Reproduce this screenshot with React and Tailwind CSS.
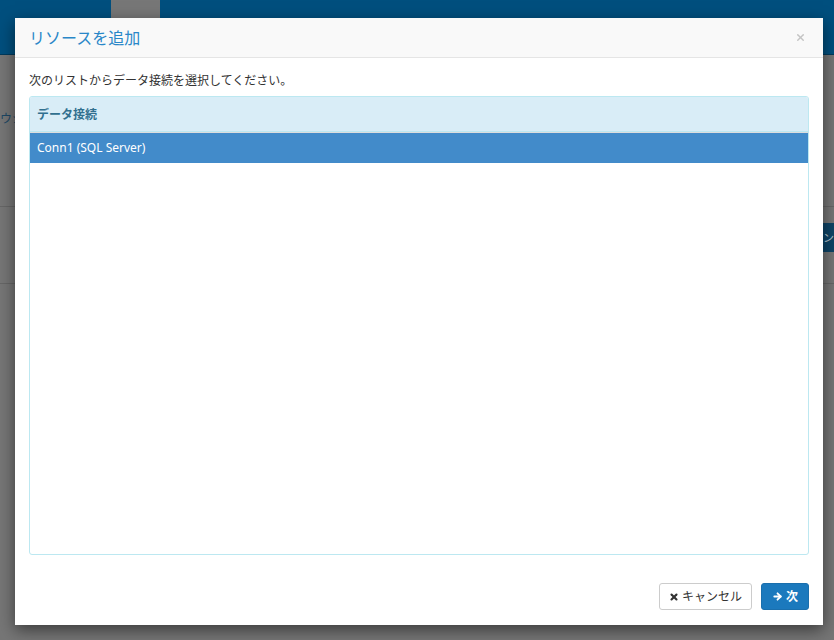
import { X, ArrowRight } from 'lucide-react';

const font = { fontFamily: '"Noto Sans", "Noto Sans CJK JP", sans-serif' };

// Dimmed page behind the dialog
const Backdrop = () => (
    <div className="absolute inset-0 bg-[#767676]">
        <div className="h-[55px] bg-[#004f7e] flex border-b border-[#003a5c]">
            <div className="ml-[111px] w-[49px] bg-[#777777]"></div>
        </div>
        <div className="h-[152px] border-b border-[#666] flex items-center">
            <span className="text-[12px] text-[#1d4764] -mt-[24px]">ウシ</span>
        </div>
        <div className="h-[77px] border-b border-[#666] flex justify-end items-center">
            <div className="w-[11px] h-[29px] bg-[#0e4466] -mt-[16px] text-[11px] leading-[29px] text-[#b7c8d4] overflow-hidden">ン</div>
        </div>
    </div>
);

const App = () => {
    return (
        <div className="relative w-[834px] h-[640px] overflow-hidden" style={font}>
            <Backdrop />

            {/* Modal */}
            <div className="absolute left-[15px] top-[18px] w-[808px] h-[607px] bg-white flex flex-col shadow-[0_5px_15px_rgba(0,0,0,0.5)]">
                <div className="h-[40px] shrink-0 bg-[#f9f9f9] border-b border-[#e5e5e5] flex items-center justify-between px-[14px]">
                    <h1 className="text-[16px] text-[#2a87c8] font-normal">リソースを追加</h1>
                    <X className="h-[11px] w-[11px] text-[#c4c4c4] mr-[3px]" strokeWidth={3} />
                </div>

                <div className="flex-1 flex flex-col px-[14px] pt-[14px] min-h-0">
                    <p className="text-[12px] text-[#333] leading-[17px] mb-[7px]">次のリストからデータ接続を選択してください。</p>
                    <div className="h-[459px] border border-[#bce8f1] rounded-[3px] overflow-hidden flex flex-col">
                        <div className="h-[35px] bg-[#d9edf7] border-b border-[#bce8f1] flex items-center px-[7px] pt-[1px] text-[12px] font-semibold text-[#31708f]">
                            データ接続
                        </div>
                        <div className="h-[31px] border-t border-[#dddddd] bg-[#428bca] flex items-center px-[7px] text-[12px] text-white">
                            Conn1 (SQL Server)
                        </div>
                    </div>
                </div>

                <div className="flex justify-end gap-[9px] px-[14px] pb-[15px]">
                    <button className="h-[27px] w-[93px] bg-white border border-[#cccccc] rounded-[3px] flex items-center justify-center gap-[3px] text-[12px] text-[#333]">
                        <X className="h-[10px] w-[10px] text-[#333]" strokeWidth={5} /> キャンセル
                    </button>
                    <button className="h-[27px] w-[48px] bg-[#1b79bd] border border-[#1a6fad] rounded-[3px] flex items-center justify-center gap-[3px] text-[12px] text-white font-semibold">
                        <ArrowRight className="h-[11px] w-[11px]" strokeWidth={4} /> 次
                    </button>
                </div>
            </div>
        </div>
    );
};

export default App;
